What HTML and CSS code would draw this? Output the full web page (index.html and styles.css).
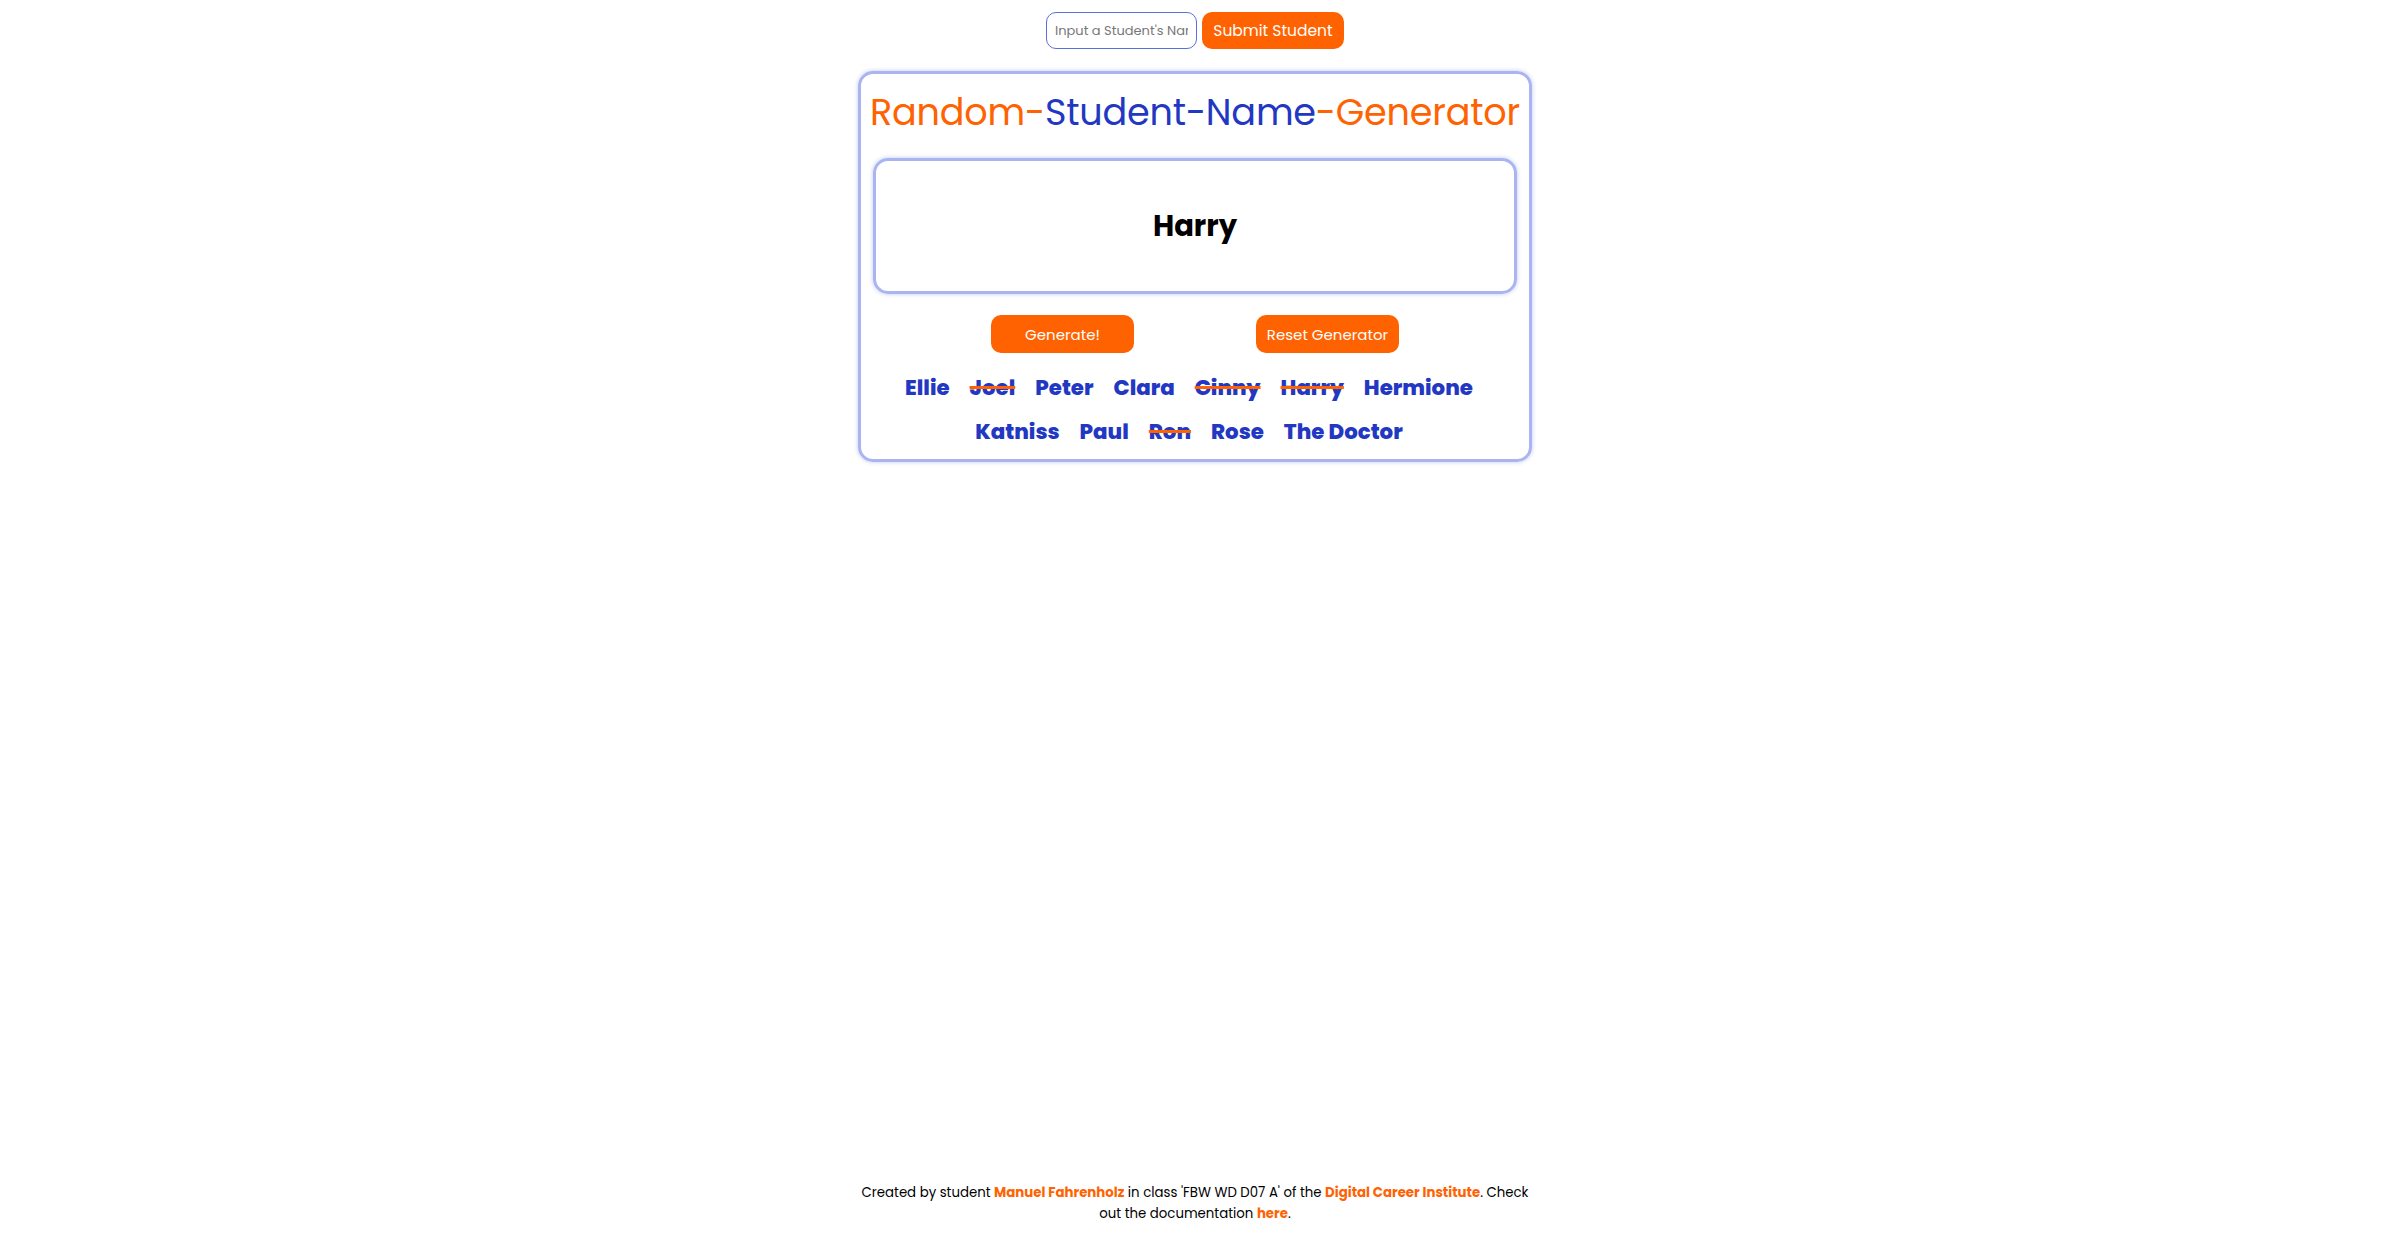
FILE: index.html
```html
<!DOCTYPE html>
<html lang="en">
<head>
    <meta charset="UTF-8">
    <title>Random Student Name Generator</title>
    <link rel="stylesheet" href="styles.css">
</head>
<body>

    <form class="add-form">
        <input class="name-input" type="text" placeholder="Input a Student's Name">
        <button class="btn btn-submit" type="button">Submit Student</button>
    </form>

<main class="card">
    <h1 class="title"><span class="orange">Random-</span><span class="blue">Student-Name</span><span class="orange">-Generator</span></h1>

    <div class="display"><!--HER VISES DET VALGTE NAVNET-->
        <p id="chosen">Harry</p>
    </div>

    <div class="controls">
        <button class="btn btn-small" type="button">Generate!</button>
        <button class="btn btn-small" type="button">Reset Generator</button>
    </div>

    <ul class="names">
        <li>Ellie</li>
        <li class="used">Joel</li>
        <li>Peter</li>
        <li>Clara</li>
        <li class="used">Ginny</li>
        <li class="used">Harry</li>
        <li>Hermione</li>
        <li>Katniss</li>
        <li>Paul</li>
        <li class="used">Ron</li>
        <li>Rose</li>
        <li>The Doctor</li>
    </ul>
</main>

<footer class="footer">
    <p>Created by student <a href="#">Manuel Fahrenholz</a> in class 'FBW WD D07 A' of the <a href="#">Digital Career Institute</a>. Check out the documentation <a href="#">here</a>.</p>
</footer>

</body>
</html>
```

FILE: styles.css
```css
/*GENERELT*/
body {
    margin: 0;
    min-height: 100vh;
    display: flex;
    flex-direction: column;
    align-items: center;
    font-family: "Poppins", "Inter", sans-serif;
    background-color: white;
}
.orange {
    color: #ff6200;
}
.blue {
    color: #2338c2;
}

/*SKJEMA OPPE*/
.add-form {
    display: flex;
    align-items: center;
    gap: 5px;
    margin-top: 12px;
}
.name-input {
    box-sizing: border-box;
    width: 151px;
    height: 37px;
    border: 1px solid #5b6fd8;
    border-radius: 10px;
    padding: 0 8px;
    font-family: inherit;
    font-size: 13px;
}
.name-input::placeholder {
    color: #777;
}
.btn {
    border: none;
    background-color: #ff6200;
    color: white;
    font-family: inherit;
    border-radius: 10px;
    cursor: pointer;
}
.btn-submit {
    width: 142px;
    height: 37px;
    font-size: 15.5px;
}

/*KORTET*/
.card {
    box-sizing: border-box;
    width: 674px;
    margin-top: 22px;
    border: 3px solid #aab4f0;
    border-radius: 15px;
    box-shadow: 0 0 4px rgba(110, 130, 230, 0.45);
    padding: 0 0 5px 0;
}
.title {
    margin: 16px 0 0 0;
    text-align: center;
    white-space: nowrap;
    font-weight: 400;
    font-size: 36.6px;
    letter-spacing: -0.2px;
    line-height: 45px;
}
.display {
    box-sizing: border-box;
    height: 136px;
    margin: 23px 12px 0 12px;
    border: 3px solid #aab4f0;
    border-radius: 15px;
    box-shadow: 0 0 4px rgba(110, 130, 230, 0.45);
    display: flex;
    align-items: center;
    justify-content: center;
}
#chosen {
    margin: 0;
    font-size: 29px;
    font-weight: 700;
    color: black;
}
.controls {
    display: flex;
    justify-content: center;
    gap: 122px;
    margin-top: 21px;
}
.btn-small {
    width: 143px;
    height: 38px;
    font-size: 15px;
}
.names {
    list-style-type: none;
    margin: 13px 0 0 0;
    padding: 0 46px 0 34px;
    display: flex;
    flex-wrap: wrap;
    justify-content: center;
    column-gap: 20px;
}
.names li {
    font-size: 21.3px;
    font-weight: 800;
    color: #2338c2;
    line-height: 44px;
}
.used {
    text-decoration: line-through;
    text-decoration-color: #ff6200;
    text-decoration-thickness: 3px;
}

/*FOOTER*/
.footer {
    margin-top: auto;
    width: 674px;
    text-align: center;
    font-size: 13.3px;
    line-height: 21px;
    color: black;
}
.footer p {
    margin: 0 0 10px 0;
}
.footer a {
    color: #ff6200;
    font-weight: 700;
    text-decoration: none;
}
```
